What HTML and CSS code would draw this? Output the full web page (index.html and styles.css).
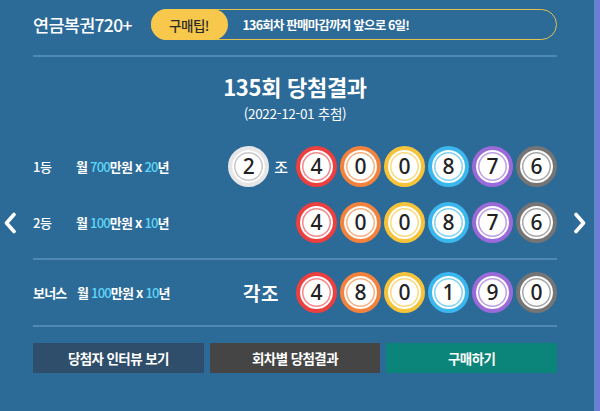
FILE: index.html
```html
<!DOCTYPE html>
<html lang="ko">
<head>
<meta charset="utf-8">
<link rel="stylesheet" href="styles.css">
</head>
<body>
<div class="page">
  <div class="main">
    <header class="top">
      <div class="brand">연금복권720+</div>
      <div class="notice">
        <span class="tip">구매팁!</span>
        <span class="notice-text">136회차 판매마감까지 앞으로 6일!</span>
      </div>
    </header>
    <div class="divider first"></div>
    <div class="heading">
      <div class="round">135회 당첨결과</div>
      <div class="date">(2022-12-01 추첨)</div>
    </div>
    <div class="row r1">
      <div class="rank">1등</div>
      <div class="prize">월 <em>700</em>만원 x <em>20</em>년</div>
      <div class="balls">
        <span class="ball white">2</span>
        <span class="jo">조</span>
        <span class="ball red">4</span>
        <span class="ball orange">0</span>
        <span class="ball yellow">0</span>
        <span class="ball blue">8</span>
        <span class="ball purple">7</span>
        <span class="ball gray">6</span>
      </div>
    </div>
    <div class="row r2">
      <div class="rank">2등</div>
      <div class="prize">월 <em>100</em>만원 x <em>10</em>년</div>
      <div class="balls">
        <span class="ball red">4</span>
        <span class="ball orange">0</span>
        <span class="ball yellow">0</span>
        <span class="ball blue">8</span>
        <span class="ball purple">7</span>
        <span class="ball gray">6</span>
      </div>
    </div>
    <div class="divider second"></div>
    <div class="row bonus">
      <div class="rank wide">보너스</div>
      <div class="prize">월 <em>100</em>만원 x <em>10</em>년</div>
      <div class="balls">
        <span class="each">각조</span>
        <span class="ball red">4</span>
        <span class="ball orange">8</span>
        <span class="ball yellow">0</span>
        <span class="ball blue">1</span>
        <span class="ball purple">9</span>
        <span class="ball gray">0</span>
      </div>
    </div>
    <div class="divider third"></div>
    <div class="buttons">
      <a class="btn interview">당첨자 인터뷰 보기</a>
      <a class="btn history">회차별 당첨결과</a>
      <a class="btn buy">구매하기</a>
    </div>
    <button class="arrow prev" aria-label="이전">
      <svg width="14" height="22" viewBox="0 0 14 22"><path d="M11 2.5 L3.5 11 L11 19.5" fill="none" stroke="#fff" stroke-width="3.6" stroke-linecap="round" stroke-linejoin="round"/></svg>
    </button>
    <button class="arrow next" aria-label="다음">
      <svg width="14" height="22" viewBox="0 0 14 22"><path d="M3 2.5 L10.5 11 L3 19.5" fill="none" stroke="#fff" stroke-width="3.6" stroke-linecap="round" stroke-linejoin="round"/></svg>
    </button>
  </div>
</div>
</body>
</html>
```

FILE: styles.css
```css
html, body {
  margin: 0;
  padding: 0;
}
body {
  width: 600px;
  height: 411px;
  overflow: hidden;
  font-family: "Noto Sans CJK KR", "Noto Sans", sans-serif;
  color: #fff;
}
.page {
  width: 600px;
  height: 411px;
  box-sizing: border-box;
  background: #2c6a98;
  border-right: 5px solid #6a7fd3;
  box-shadow: inset -1px 0 0 #4f8ec0;
}
.main {
  position: relative;
  width: 524px;
  height: 411px;
  padding-left: 33px;
  padding-top: 9px;
  box-sizing: content-box;
}
.top {
  display: flex;
  align-items: center;
  height: 31px;
}
.brand {
  font-size: 17.5px;
  font-weight: 500;
  letter-spacing: -0.7px;
  width: 118px;
  flex: none;
}
.notice {
  flex: 1;
  display: flex;
  align-items: center;
  height: 31px;
  box-sizing: border-box;
  border: 1.5px solid #e2c14c;
  border-radius: 16px;
}
.tip {
  display: flex;
  align-items: center;
  justify-content: center;
  width: 77px;
  height: 31px;
  margin-left: -1.5px;
  border-radius: 16px;
  background: #f7c84b;
  color: #2a2a2a;
  font-size: 13.5px;
  font-weight: 500;
  letter-spacing: -0.5px;
}
.notice-text {
  margin-left: 15px;
  font-size: 12.5px;
  font-weight: 700;
  letter-spacing: -0.8px;
}
.divider {
  height: 2px;
  background: #4f87b5;
}
.divider.first { margin-top: 15px; }
.divider.second { margin-top: 14px; }
.divider.third { margin-top: 11px; }
.heading {
  text-align: center;
  margin-top: 16px;
}
.round {
  font-size: 22px;
  font-weight: 700;
  line-height: 26px;
  letter-spacing: -0.3px;
}
.date {
  font-size: 13.5px;
  line-height: 16px;
  margin-top: 6px;
  letter-spacing: -0.3px;
}
.row {
  display: flex;
  align-items: center;
  height: 44px;
}
.row.r1 { margin-top: 23px; }
.row.r2 { margin-top: 12px; }
.row.bonus { margin-top: 10px; }
.rank {
  width: 43px;
  font-size: 13px;
  font-weight: 500;
  letter-spacing: -0.5px;
}
.rank.wide {
  width: 44px;
  font-weight: 700;
  letter-spacing: -0.8px;
}
.prize {
  font-size: 13px;
  font-weight: 700;
  letter-spacing: -0.8px;
}
.prize em {
  font-style: normal;
  font-weight: 500;
  color: #5ed6f6;
}
.balls {
  margin-left: auto;
  display: flex;
  align-items: center;
  gap: 3px;
}
.ball {
  width: 41px;
  height: 41px;
  box-sizing: border-box;
  border-radius: 50%;
  border: 4px solid var(--c);
  background: #fff;
  box-shadow: inset 0 0 0 2px #fff, inset 0 0 0 3.5px var(--l);
  display: flex;
  align-items: center;
  justify-content: center;
  color: #222;
  font-family: "Noto Sans", sans-serif;
  font-size: 21px;
  font-weight: 500;
  line-height: 1;
}
.ball.red { --c: #ec3f3f; --l: #f4888a; }
.ball.orange { --c: #f3833c; --l: #f7b080; }
.ball.yellow { --c: #f6c43a; --l: #f9da7e; }
.ball.blue { --c: #3bb7ee; --l: #82d2f4; }
.ball.purple { --c: #9a6bd8; --l: #bd9fe6; }
.ball.gray { --c: #757575; --l: #a8a8a8; }
.ball.white { --c: #e6e6e6; --l: #c8c8c8; }
.jo {
  font-size: 15px;
  font-weight: 500;
  margin: 0 5px 0 2px;
}
.each {
  font-size: 19px;
  font-weight: 700;
  margin-right: 14px;
  letter-spacing: 0.5px;
}
.buttons {
  display: flex;
  gap: 6px;
  margin-top: 16px;
}
.btn {
  flex: 1;
  height: 30px;
  display: flex;
  align-items: center;
  justify-content: center;
  font-size: 13.5px;
  font-weight: 700;
  letter-spacing: -0.6px;
  color: #fff;
}
.btn.interview { background: #2f4e6b; }
.btn.history { background: #454545; }
.btn.buy { background: #0b8479; }
.arrow {
  position: absolute;
  top: 212px;
  width: 14px;
  height: 22px;
  padding: 0;
  border: 0;
  background: none;
  display: block;
}
.arrow svg { display: block; }
.arrow.prev { left: 3px; }
.arrow.next { left: 573px; }
```
